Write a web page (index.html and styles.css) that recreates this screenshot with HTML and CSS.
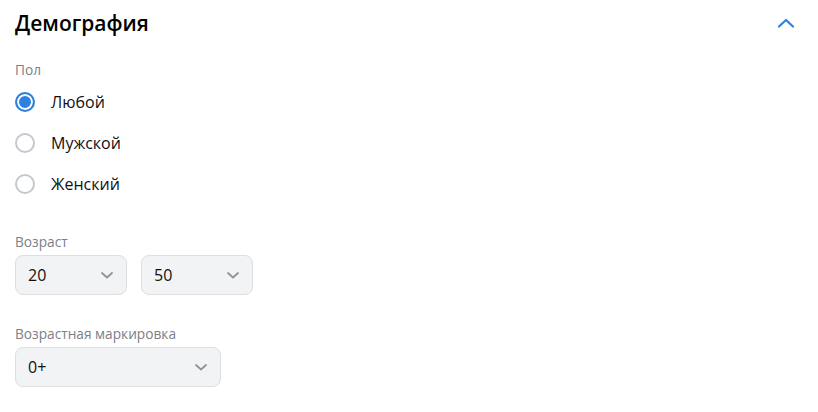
FILE: index.html
```html
<!DOCTYPE html>
<html lang="ru">
<head>
<meta charset="utf-8">
<link rel="stylesheet" href="styles.css">
</head>
<body>
<section class="panel">
  <header class="head">
    <h2 class="title">Демография</h2>
    <svg class="collapse" width="18" height="10" viewBox="0 0 18 10"><path d="M2 8.5 L9 2 L16 8.5" fill="none" stroke="#2d81e0" stroke-width="2.2" stroke-linecap="round" stroke-linejoin="round"/></svg>
  </header>

  <div class="label">Пол</div>
  <div class="radios">
    <label class="radio"><span class="dot on"></span><span class="rtext">Любой</span></label>
    <label class="radio"><span class="dot"></span><span class="rtext">Мужской</span></label>
    <label class="radio"><span class="dot"></span><span class="rtext">Женский</span></label>
  </div>

  <div class="label age-label">Возраст</div>
  <div class="row">
    <div class="select w112"><span>20</span><svg width="12" height="7" viewBox="0 0 12 7"><path d="M1 1 L6 5.5 L11 1" fill="none" stroke="#8e949c" stroke-width="1.8" stroke-linecap="round" stroke-linejoin="round"/></svg></div>
    <div class="select w112"><span>50</span><svg width="12" height="7" viewBox="0 0 12 7"><path d="M1 1 L6 5.5 L11 1" fill="none" stroke="#8e949c" stroke-width="1.8" stroke-linecap="round" stroke-linejoin="round"/></svg></div>
  </div>

  <div class="label mark-label">Возрастная маркировка</div>
  <div class="row">
    <div class="select w206"><span>0+</span><svg width="12" height="7" viewBox="0 0 12 7"><path d="M1 1 L6 5.5 L11 1" fill="none" stroke="#8e949c" stroke-width="1.8" stroke-linecap="round" stroke-linejoin="round"/></svg></div>
  </div>
</section>
</body>
</html>
```
FILE: styles.css
```css
* { box-sizing: border-box; }
body {
  margin: 0;
  background: #fff;
  font-family: "Open Sans", "Noto Sans", sans-serif;
  color: #111;
}
.panel {
  width: 818px;
  padding: 7px 15px 0 15px;
}
.head {
  display: flex;
  align-items: center;
  justify-content: space-between;
  height: 32px;
}
.title {
  margin: 0;
  font-size: 21px;
  font-weight: 600;
  color: #000;
}
.collapse { margin-right: 8px; margin-top: 0; }
.label {
  font-size: 13.7px;
  color: #7b8089;
  line-height: 18px;
  margin-top: 22px;
}
.radios {
  display: flex;
  flex-direction: column;
  margin-top: 3px;
}
.radio {
  display: flex;
  align-items: center;
  height: 40.7px;
  gap: 16px;
}
.dot {
  width: 20px;
  height: 20px;
  border-radius: 50%;
  border: 2px solid #c3c8cf;
  flex: none;
}
.dot.on {
  border-color: #2d81e0;
  background: #2d81e0;
  box-shadow: inset 0 0 0 2px #fff;
}
.rtext { font-size: 16px; color: #111; }
.age-label { margin-top: 29px; }
.mark-label { margin-top: 30px; }
.row {
  display: flex;
  gap: 14px;
  margin-top: 4px;
}
.select {
  height: 40px;
  border: 1px solid #dcdee2;
  border-radius: 8px;
  background: #f2f3f5;
  display: flex;
  align-items: center;
  justify-content: space-between;
  padding: 0 13px 0 12px;
  font-size: 16px;
  color: #111;
}
.w112 { width: 112px; }
.w206 { width: 206px; }
```
